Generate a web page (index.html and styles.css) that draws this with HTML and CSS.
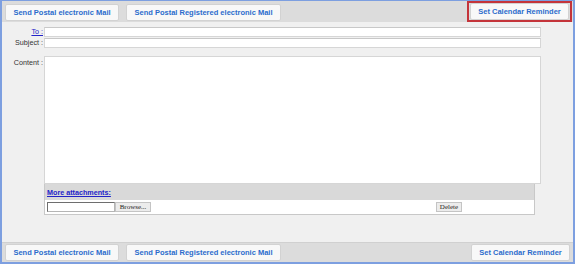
FILE: index.html
```html
<!DOCTYPE html>
<html lang="en">
<head>
  <meta charset="UTF-8" />
  <title>Send Mail</title>
  <link rel="stylesheet" href="styles.css">
</head>
<body>
  <div class="frame">
    <!-- barre du haut -->
    <div class="toolbar top">
      <button class="tb-btn btn-one">Send Postal electronic Mail</button>
      <button class="tb-btn btn-two">Send Postal Registered electronic Mail</button>
      <div class="reminder-mark">
        <button class="tb-btn btn-three">Set Calendar Reminder</button>
      </div>
    </div>

    <div class="form">
      <div class="row row-to">
        <label class="lbl"><a href="#">To :</a></label>
        <div class="field"></div>
      </div>
      <div class="row row-subject">
        <label class="lbl">Subject :</label>
        <div class="field"></div>
      </div>
      <div class="row row-content">
        <label class="lbl">Content :</label>
        <div class="area"></div>
      </div>
      <div class="row">
        <span class="lbl"></span>
        <div class="attach">
          <div class="attach-head"><a href="#">More attachments:</a></div>
          <div class="attach-row">
            <span class="file-box"></span>
            <span class="small-btn browse">Browse...</span>
            <span class="small-btn delete">Delete</span>
          </div>
        </div>
      </div>
    </div>

    <div class="toolbar bottom">
      <button class="tb-btn btn-one">Send Postal electronic Mail</button>
      <button class="tb-btn btn-two">Send Postal Registered electronic Mail</button>
      <button class="tb-btn btn-three btn-right">Set Calendar Reminder</button>
    </div>
  </div>
</body>
</html>
```

FILE: styles.css
```css
body {
  margin: 0;
  background-color: #ffffff;
  font-family: "Liberation Sans", Arial, sans-serif;
}
.frame {
  width: 571px;
  height: 261px;
  border: 2px solid #7d9fe0;
  border-top-width: 1px;
  background-color: #f0f0f0;
  display: flex;
  flex-direction: column;
}
.toolbar {
  height: 20px;
  background-color: #dcdcdc;
  display: flex;
  align-items: center;
  padding: 0 3px;
  gap: 7px;
  box-sizing: border-box;
}
.toolbar.top {
  height: 21px;
  padding-top: 1px;
}
.toolbar.bottom {
  border-top: 1px solid #d0d0d0;
}
.tb-btn {
  height: 17px;
  padding: 0;
  margin: 0;
  background-color: #f8f8f8;
  border: 1px solid #d2d2d2;
  border-radius: 2px;
  color: #2b6ccc;
  font-family: "Liberation Sans", Arial, sans-serif;
  font-size: 7.5px;
  font-weight: bold;
  cursor: pointer;
}
.btn-one { width: 114px; }
.btn-two { width: 155px; }
.btn-three { width: 99px; }
.reminder-mark {
  margin-left: auto;
  margin-right: -2px;
  margin-top: -1px;
  border: 2px solid #c4343a;
  padding: 0 1px;
  height: 21px;
  display: flex;
  align-items: center;
  box-sizing: border-box;
  align-self: flex-start;
}
.btn-right {
  margin-left: auto;
}

/* formulaire */
.form {
  flex: 1;
  padding-top: 5px;
  font-size: 7.2px;
  color: #333333;
}
.row {
  display: flex;
  align-items: flex-start;
}
.lbl {
  width: 42px;
  flex: none;
  text-align: right;
  padding-right: 1px;
  box-sizing: border-box;
  line-height: 10px;
}
.lbl a {
  color: #2323c8;
}
.field {
  width: 497px;
  height: 10px;
  background-color: #ffffff;
  border: 1px solid #d6d6d6;
  border-top-color: #c8c8c8;
  box-sizing: border-box;
}
.row-subject {
  margin-top: 1px;
}
.row-content {
  margin-top: 8px;
}
.row-content .lbl {
  padding-top: 2px;
}
.area {
  width: 497px;
  height: 128px;
  background-color: #ffffff;
  border: 1px solid #d6d6d6;
  box-sizing: border-box;
}
.attach {
  width: 491px;
  border: 1px solid #c8c8c8;
  border-top: none;
  box-sizing: border-box;
}
.attach-head {
  height: 16px;
  background-color: #d9d9d9;
  padding-left: 2px;
  line-height: 18px;
}
.attach-head a {
  color: #2323c8;
  font-weight: bold;
}
.attach-row {
  height: 14px;
  background-color: #ffffff;
  display: flex;
  align-items: center;
  padding-left: 2px;
}
.file-box {
  width: 68px;
  height: 10px;
  background-color: #ffffff;
  border: 1px solid #b5b5b5;
  border-top-color: #6e6e6e;
  border-left-color: #6e6e6e;
  box-sizing: border-box;
}
.small-btn {
  height: 10px;
  background-color: #ececec;
  border: 1px solid #c4c4c4;
  box-sizing: border-box;
  font-family: "Liberation Serif", "Times New Roman", serif;
  font-size: 7px;
  line-height: 8px;
  color: #222222;
  text-align: center;
}
.browse {
  width: 36px;
}
.delete {
  width: 26px;
  margin-left: 285px;
}
```
